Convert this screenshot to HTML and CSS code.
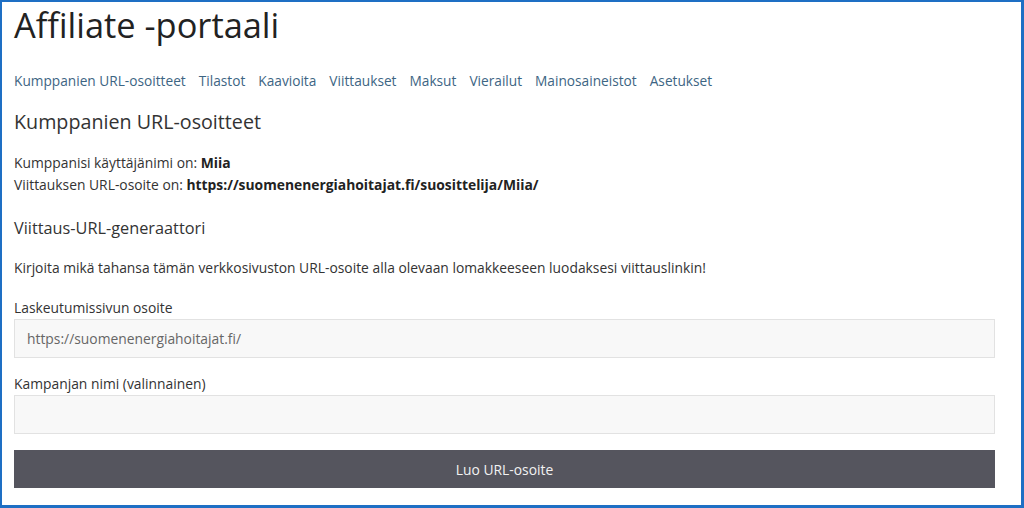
FILE: index.html
```html
<!DOCTYPE html>
<html lang="fi">
<head>
    <meta charset="UTF-8">
    <meta name="viewport" content="width=device-width, initial-scale=1.0">
    <title>Affiliate -portaali</title>
    <link rel="stylesheet" href="styles.css">
</head>
<body>
    <div class="frame">
        <h1 class="page-title">Affiliate -portaali</h1>

        <nav class="affiliate-nav">
            <a href="#">Kumppanien URL-osoitteet</a>
            <a href="#">Tilastot</a>
            <a href="#">Kaavioita</a>
            <a href="#">Viittaukset</a>
            <a href="#">Maksut</a>
            <a href="#">Vierailut</a>
            <a href="#">Mainosaineistot</a>
            <a href="#">Asetukset</a>
        </nav>

        <h2 class="section-title">Kumppanien URL-osoitteet</h2>
        <p class="info">
            Kumppanisi käyttäjänimi on: <strong>Miia</strong><br>
            Viittauksen URL-osoite on: <strong>https://suomenenergiahoitajat.fi/suosittelija/Miia/</strong>
        </p>

        <h3 class="sub-title">Viittaus-URL-generaattori</h3>
        <p class="intro">Kirjoita mikä tahansa tämän verkkosivuston URL-osoite alla olevaan lomakkeeseen luodaksesi viittauslinkin!</p>

        <form class="generator">
            <label for="landing">Laskeutumissivun osoite</label>
            <input type="text" id="landing" value="https://suomenenergiahoitajat.fi/">
            <label for="campaign">Kampanjan nimi (valinnainen)</label>
            <input type="text" id="campaign">
            <button type="button">Luo URL-osoite</button>
        </form>
    </div>
</body>
</html>
```

FILE: styles.css
```css
html, body {
    height: 100%;
}
body {
    margin: 0;
    font-family: "Open Sans", sans-serif;
    font-size: 13.85px;
    color: #333;
    background: #fff;
}
.frame {
    box-sizing: border-box;
    height: 100%;
    border: 3px solid #1e6fc4;
    border-left-width: 2px;
    border-top-width: 2px;
    padding: 0 26px 0 12px;
}
.page-title {
    margin: 0;
    padding-top: 1px;
    font-size: 34.4px;
    font-weight: 400;
    line-height: 44px;
    color: #222;
}
.affiliate-nav {
    display: flex;
    gap: 13px;
    margin-top: 23px;
    font-size: 13.7px;
    line-height: 22px;
}
.affiliate-nav a {
    color: #3d6583;
    text-decoration: none;
}
.section-title {
    margin: 16px 0 0;
    font-size: 19.7px;
    font-weight: 400;
    line-height: 28px;
    color: #333;
}
.info {
    margin: 16px 0 0;
    line-height: 22px;
}
.info strong {
    color: #222;
}
.sub-title {
    margin: 20px 0 0;
    font-size: 16.3px;
    font-weight: 400;
    line-height: 24px;
}
.intro {
    margin: 17px 0 0;
    line-height: 22px;
}
.generator {
    display: flex;
    flex-direction: column;
    margin-top: 18px;
}
.generator label {
    line-height: 22px;
}
.generator input {
    box-sizing: border-box;
    height: 39px;
    margin: 0 0 15px;
    padding: 0 12px;
    border: 1px solid #e2e2e2;
    background: #f8f8f8;
    font-family: "Open Sans", sans-serif;
    font-size: 13.85px;
    color: #666;
    outline: none;
}
.generator button {
    height: 38px;
    margin-top: 1px;
    border: none;
    background: #55555e;
    color: #f2f2f2;
    font-family: "Open Sans", sans-serif;
    font-size: 13.85px;
    cursor: pointer;
}
```
